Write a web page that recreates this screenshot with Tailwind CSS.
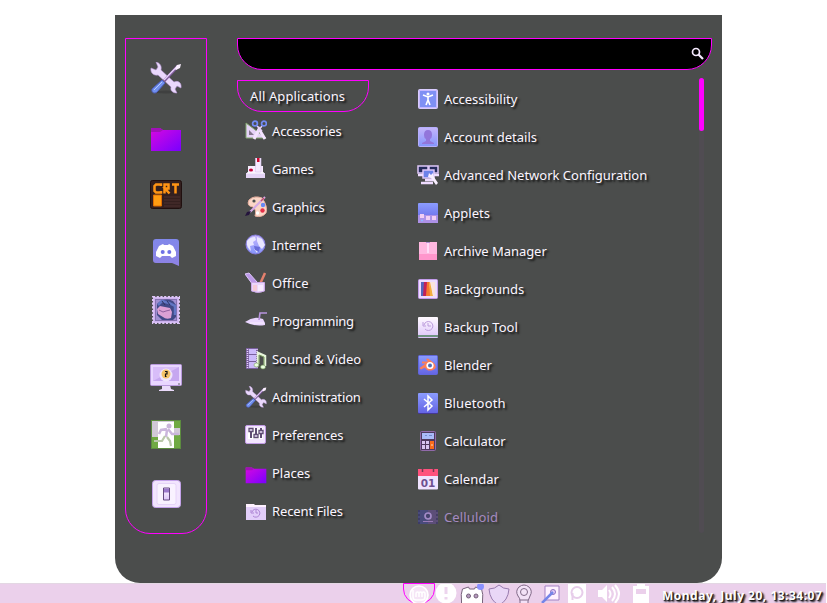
<!DOCTYPE html>
<html lang="en">
<head>
<meta charset="utf-8">
<title>Application menu</title>
<script src="https://cdn.jsdelivr.net/npm/@tailwindcss/browser@4"></script>
</head>
<body class="bg-white w-[827px] h-[603px] overflow-hidden font-['Noto_Sans',sans-serif] text-[13px] text-[#fbf5ff]">
<svg class="absolute w-0 h-0" aria-hidden="true">
  <defs>
    <linearGradient id="folder" x1="0" y1="0" x2="1" y2="1"><stop offset="0" stop-color="#d808e0"/><stop offset="1" stop-color="#7800ff"/></linearGradient>
    <linearGradient id="lilac" x1="0" y1="0" x2="0" y2="1"><stop offset="0" stop-color="#fffaff"/><stop offset="1" stop-color="#dcc4fa"/></linearGradient>
    <linearGradient id="blue" x1="0" y1="0" x2="0" y2="1"><stop offset="0" stop-color="#8b9cff"/><stop offset="1" stop-color="#6464e4"/></linearGradient>
    <linearGradient id="violet" x1="0" y1="0" x2="0" y2="1"><stop offset="0" stop-color="#8188ea"/><stop offset="1" stop-color="#8e82e4"/></linearGradient>
    <linearGradient id="pale" x1="0" y1="0" x2="0" y2="1"><stop offset="0" stop-color="#c5b5fb"/><stop offset="1" stop-color="#8495fc"/></linearGradient>
    <symbol id="tools" viewBox="0 0 32 32">
      <ellipse cx="16" cy="30" rx="13" ry="1.500" fill="#333" opacity=".5"/>
      <path d="M6 0l2 5-2 3-5-2c-1 5 3 8 7 7l13 12c-1 4 2 6 6 6l-2-4 2-3 4 2c1-5-3-8-7-6L11 8C12 4 10 1 6 0z" fill="#ead8fc" stroke="#b596d4" stroke-width=".6"/>
      <path d="M28 4L14 19" stroke="#7e5a9a" stroke-width="3"/><path d="M27.500 4L14 18" stroke="#e6d0fa" stroke-width="1.500"/>
      <path d="M31 2l-1 4-4 2-1-1 2-4z" fill="#fbf0ff"/>
      <path d="M12 18l3 3-8 9c-2 2-6 1-5-3z" fill="#7090ee" stroke="#4d5dbd"/><path d="M12 20l-8 8" stroke="#b4c8ff"/>
    </symbol>
    <symbol id="dir" viewBox="0 0 32 32"><path d="M1 5h9l3 2h18v21H1z" fill="url(#folder)"/><path d="M1 5h9l3 2-3 2H1z" fill="#a010b8"/></symbol>
  </defs>
</svg>
<div class="flex flex-col h-[603px]">
  <main class="mt-[15px] ml-[115px] w-[607px] h-[568px] shrink-0 bg-[#4b4d4c] rounded-b-[25px] flex items-start pt-[23px] pl-[10px]">
    <nav class="w-[82px] h-[496px] border border-[#f0f] rounded-b-[25px] flex flex-col items-center pt-[23px]">
      <svg class="size-8" viewBox="0 0 32 32"><use href="#tools"/></svg>
      <svg class="size-8 mt-[29px]" viewBox="0 0 32 32"><use href="#dir"/></svg>
      <svg class="size-8 mt-6" viewBox="0 0 32 32"><rect x=".5" y="1.500" width="31" height="28" rx="2" fill="#34201f" stroke="#20100f"/><path d="M14 18h16M14 21h16M14 24h16M14 27h16" stroke="#4c3030"/><g fill="none" stroke="#ff9414" stroke-width="2.500"><path d="M11 7V5.500H6L4.500 7v5L6 13.500h5V12M14.500 14.500V5.500h4v4h-3.500l4.500 5M22 5.500h7M25.500 5v9.500"/></g><path d="M3.500 16h8v11h-8z" fill="#ff9c12" stroke="#e06d00"/></svg>
      <svg class="size-8 mt-[25px]" viewBox="0 0 32 32"><path d="M6 3h20q3 0 3 3v24l-7-3H6q-3 0-3-3V6q0-3 3-3z" fill="url(#violet)"/><path d="M9 10l4-2 1 1h4l1-1 4 2 3 6v4l-4 2-2-2h-8l-2 2-4-2v-4z" fill="#fff"/><circle cx="12.700" cy="16" r="2" fill="#6f72e6"/><circle cx="19.300" cy="16" r="2" fill="#6f72e6"/></svg>
      <svg class="size-8 mt-[26px]" viewBox="0 0 32 32"><rect x="3" y="3" width="26" height="26" fill="#cdb2ef" stroke="#dcc4f6" stroke-width="2" stroke-dasharray="2.200 1.500"/><rect x="5.500" y="5.500" width="21" height="21" fill="#a08fd2" stroke="#8672b0"/><path d="M7 10q7-7 16-3l3 4v12l-3 3H12l-5-5z" fill="#414987"/><path d="M8 11l4-4 7 2 6 3v9" stroke="#6176c4" stroke-width="2.500" fill="none"/><path d="M12 7l3 4M17 7l3 4" stroke="#2e3361"/><path d="M7 15l3-3 10 2 2 4-1 6q-5 2-8-1l-5-3z" fill="#dba0d4"/><path d="M9 16l4 2 3-1 4-1" stroke="#7d4f92" stroke-width=".8" fill="none"/></svg>
      <svg class="size-8 mt-9" viewBox="0 0 32 32"><path d="M12 23h8l1 4 3 1v1H9v-1l3-1z" fill="#eadafa"/><rect x=".5" y="2.500" width="31" height="21" rx="1" fill="#e9d6ff" stroke="#b899dc"/><path d="M3 5h26v14H3z" fill="#c6a7f0"/><path d="M3 5h26L3 19z" fill="#d8bdf9"/><circle cx="16" cy="13" r="6.500" fill="#efe5fa"/><circle cx="16" cy="12" r="4.500" fill="#f5c468"/><path d="M15 9.500h2v2.500h-1.500v2.500h1" stroke="#111" stroke-width="1.200" fill="none"/><path d="M28 22h2" stroke="#666"/></svg>
      <svg class="size-8 mt-[25px]" viewBox="0 0 32 32"><rect x="1.500" y="1.500" width="29" height="28" fill="#d1c9d7" stroke="#5c8b3f"/><path d="M2 18h6v11H2zM24 16h6v13h-6zM24 2h6v7h-6z" fill="#70aa43"/><path d="M8 3h16v26H8z" fill="#fff"/><path d="M17 10l-6 1-2 4M18 10l4 5h7M17 11l-1 7" stroke="#cbb6dc" stroke-width="2.500" fill="none"/><path d="M17 18l3 4 1 5M15 17l-3 5H4" stroke="#bac8aa" stroke-width="2.200" fill="none"/><circle cx="19" cy="7" r="2.500" fill="#c9b4da"/></svg>
      <svg class="size-8 mt-[27px]" viewBox="0 0 32 32"><rect x="2.500" y="2.500" width="28" height="27" rx="3" fill="#f2e5fe" stroke="#c4a2ea"/><rect x="7" y="5.500" width="19" height="21" rx="2" fill="#f9f2ff" stroke="#e6d4f8"/><path d="M13.500 10h6v12h-6z" fill="url(#lilac)" stroke="#654a81"/><path d="M14 10.500h5v4h-5z" fill="#9c78cc"/></svg>
    </nav>
    <div class="ml-[30px] w-[475px] flex flex-col">
      <div class="h-8 bg-black border border-[#f0f] rounded-b-[25px] flex justify-end items-center pr-[6px]">
        <svg class="size-[14px]" viewBox="0 0 14 14" fill="none" stroke="#f6eaff"><circle cx="5" cy="5" r="3.500" stroke-width="1.700"/><path d="M7.500 7.500L12 12" stroke-width="2.200"/></svg>
      </div>
      <div class="flex">
        <ul class="w-[132px] pt-[10px] whitespace-nowrap [text-shadow:2px_2px_2px_#111] [&_span]:pt-[2px]">
          <li class="h-8 border border-[#f0f] rounded-b-[25px] pl-3 flex items-center"><span class="tracking-[0.13px]">All Applications</span></li>
          <li class="h-[38px] pl-2 flex items-center gap-[5px]"><svg class="size-[22px]" viewBox="0 0 22 22"><path d="M1 3v15h20z" fill="#e5d2f8" stroke="#83aa6f"/><path d="M4 10v5h5z" fill="#85768f"/><g fill="none"><path d="M9 19l5-10 6 10" stroke="#f3e2ff" stroke-width="3"/><path d="M12 6l5 5M17 6l-4 5" stroke="#e7d1fa" stroke-width="1.500"/><circle cx="10" cy="3.500" r="2.400" stroke="#738bf5" stroke-width="1.700"/><circle cx="19" cy="3.500" r="2.400" stroke="#738bf5" stroke-width="1.700"/></g></svg><span class="tracking-[-0.1px]">Accessories</span></li>
          <li class="h-[38px] pl-2 flex items-center gap-[5px]"><svg class="size-[22px]" viewBox="0 0 22 22"><path d="M3 8h15v6l2 2v4H1v-4l2-2z" fill="#f8edff"/><path d="M1 15h19v5H1z" fill="#e4d4f6"/><path d="M2 15h17" stroke="#fff"/><path d="M10.500 0h5.500v14h-5.500z" fill="#f6e9ff" stroke="#d9c3ef" stroke-width=".6"/><path d="M12 0h2.500v4H12z" fill="#d00830"/><ellipse cx="6" cy="12" rx="2" ry="1.500" fill="#c70038"/><path d="M2 6q3-1 4 2" stroke="#555" fill="none"/></svg><span class="tracking-[-0.2px]">Games</span></li>
          <li class="h-[38px] pl-2 flex items-center gap-[5px]"><svg class="size-[22px]" viewBox="0 0 22 22"><path d="M4 4q5-5 13-2 6 8 4 15-4 5-11 3 2-6-2-9-7-1-4-7z" fill="#fbd6c7" stroke="#e7af9e"/><circle cx="9" cy="5" r="1.600" fill="#4b5050"/><circle cx="18" cy="9" r="2.200" fill="#6689f6"/><circle cx="17.500" cy="14.500" r="2.200" fill="#e52f48"/><circle cx="12.500" cy="17" r="1.700" fill="#fff"/><path d="M20 1L5 16" stroke="#d4aae6" stroke-width="2"/><path d="M19 2l-3 3" stroke="#c44e66" stroke-width="1.500"/><path d="M6 15l-2 4-4 1 2-4z" fill="#24143c"/></svg><span class="tracking-[-0.15px]">Graphics</span></li>
          <li class="h-[38px] pl-2 flex items-center gap-[5px]"><svg class="size-[22px]" viewBox="0 0 22 22"><circle cx="10.500" cy="10.500" r="9.500" fill="url(#pale)" stroke="#857bdb"/><path d="M2 7q3-4 8-4l1 3-3 2 1 3-4 1 1 5q-5-4-4-10zM12 3l5 2 3 6-3 4-3-3-2-5zM9 15l4 1-1 3z" fill="#e9e6ff"/><path d="M9 12l6 1-1 5-4-2z" fill="#686bd9"/></svg><span class="tracking-[-0.1px]">Internet</span></li>
          <li class="h-[38px] pl-2 flex items-center gap-[5px]"><svg class="size-[22px]" viewBox="0 0 22 22"><path d="M0 2l4-1 8 9-4 3z" fill="#bc99e8" stroke="#dec6fb"/><path d="M20 1l-5 11" stroke="#e3806d" stroke-width="2.500"/><path d="M6.500 10.500h13V19q-6 3-13 0z" fill="#ead5fc" stroke="#cba9e8"/><path d="M8 13h4v6H8z" fill="#f5c9d8"/><path d="M13 13h5v6h-5z" fill="#f7eaff"/></svg><span class="tracking-[0.1px]">Office</span></li>
          <li class="h-[38px] pl-2 flex items-center gap-[5px]"><svg class="size-[22px]" viewBox="0 0 22 22"><path d="M0 12q7-5 14-4l4 1 2 4v2q-10 2-20-3z" fill="#ead6ff"/><path d="M14 10l1-7h7" stroke="#b894dd" stroke-width="1.700" fill="none"/><path d="M5 13h14" stroke="#f8edff"/></svg><span class="tracking-[-0.3px]">Programming</span></li>
          <li class="h-[38px] pl-2 flex items-center gap-[5px]"><svg class="size-[22px]" viewBox="0 0 22 22"><path d="M1 0h12v21H1z" fill="#785f9b"/><path d="M2.500 1v20M12 1v20" stroke="#e6d1fb" stroke-dasharray="1 1" stroke-width="1.500"/><path d="M4 1h7v5H4zM4 7h7v6H4zM4 14h7v6H4z" fill="#cbb9fa"/><path d="M13 16V5l7 3v10" stroke="#e7f5db" stroke-width="2.500" fill="none"/><path d="M14 16V7l5 2v9" stroke="#799c5e" fill="none"/><ellipse cx="11.500" cy="17" rx="2.500" ry="2" fill="#eaffdf" stroke="#799c5e" stroke-width=".6"/><ellipse cx="18" cy="19" rx="2.500" ry="2" fill="#eaffdf" stroke="#799c5e" stroke-width=".6"/></svg><span class="tracking-[-0.05px]">Sound &amp; Video</span></li>
          <li class="h-[38px] pl-2 flex items-center gap-[5px]"><svg class="size-[22px]" viewBox="0 0 32 32"><use href="#tools"/></svg><span class="tracking-[-0.12px]">Administration</span></li>
          <li class="h-[38px] pl-2 flex items-center gap-[5px]"><svg class="size-[22px]" viewBox="0 0 22 22"><rect x=".5" y="1.500" width="20" height="18" rx="1.500" fill="#f3e6ff" stroke="#c19ae5"/><path d="M3 4h15v11H3z" fill="#fff"/><path d="M6 4v10M11 4v10M16 4v10" stroke="#5f4d73" stroke-width="2"/><path d="M4 4.500h4v3H4zM9 10.500h4v3H9zM14 6.500h4v3h-4z" fill="#eee0fc" stroke="#5f4d73" stroke-width="1.300"/></svg><span class="tracking-[-0.1px]">Preferences</span></li>
          <li class="h-[38px] pl-2 flex items-center gap-[5px]"><svg class="size-[22px] mt-1" viewBox="0 0 32 32"><use href="#dir"/></svg><span>Places</span></li>
          <li class="h-[38px] pl-2 flex items-center gap-[5px]"><svg class="size-[22px]" viewBox="0 0 22 22"><path d="M1 4h8l1 1h11v15H1z" fill="#fff1ff"/><path d="M1 7h20v13H1z" fill="#e2cef9"/><path d="M6 10v3h3M7 12a4 4 0 1 1 1 4M11 10v3h2" stroke="#ad84d4" fill="none"/></svg><span class="tracking-[-0.1px]">Recent Files</span></li>
        </ul>
        <ul class="ml-[49px] w-[276px] pt-[10px] whitespace-nowrap [text-shadow:2px_2px_2px_#111] [&_span]:pt-[2px]">
          <li class="h-[38px] flex items-center gap-[5px]"><svg class="size-[21px]" viewBox="0 0 21 21"><rect x=".5" y=".5" width="19" height="19" rx="1" fill="#c5b8ff" stroke="#d9ccff"/><path d="M2 2h16v16H2z" fill="#7f90f4"/><circle cx="10" cy="5" r="1.500" fill="#fff"/><path d="M5 6l5 2 5-2M10 8v4M8 16l2-5 2 5" stroke="#fff" stroke-width="1.600" fill="none"/></svg><span>Accessibility</span></li>
          <li class="h-[38px] flex items-center gap-[5px]"><svg class="size-[21px]" viewBox="0 0 21 21"><rect x=".5" y=".5" width="19" height="19" rx="1" fill="url(#pale)" stroke="#b5aefc"/><path d="M10 3q4 0 4 5 0 3-2 4v2l4 2v1H4v-1l4-2v-2Q6 11 6 8q0-5 4-5z" fill="#9276db"/></svg><span>Account details</span></li>
          <li class="h-[38px] flex items-center gap-[5px]"><svg class="size-[21px] overflow-visible" viewBox="0 0 21 21"><g fill="#252b5c" stroke="#ddc6f7" stroke-width="1.500"><path d="M0 1h10v7H0zM11 1h9v7h-9z"/><path d="M5 5h11v8H5z" fill="#6c82e8"/></g><path d="M0 10h5M16 10h5M7 15h8M3 18h12" stroke="#efdcff" stroke-width="2.500"/><path d="M11 8l2 2 2-2 1 4 4 6-2 2-5-7-3-1z" fill="#f8eeff"/></svg><span>Advanced Network Configuration</span></li>
          <li class="h-[38px] flex items-center gap-[5px]"><svg class="size-[21px]" viewBox="0 0 21 21"><rect width="20" height="20" rx="1" fill="url(#blue)"/><path d="M0 12h20v8H0z" fill="#ad91e7"/><path d="M2 11h4v4H2zM8 13h4v4H8zM14 13h4v4h-4z" fill="#f1cdf4"/><path d="M3 17.500h2" stroke="#90baff" stroke-width="1.500"/></svg><span>Applets</span></li>
          <li class="h-[38px] flex items-center gap-[5px]"><svg class="size-[21px]" viewBox="0 0 21 21"><path d="M1 1h18v18H1z" fill="#ffb8e0"/><path d="M1 13h18v6H1z" fill="#ff96cc"/><path d="M10 2v10" stroke="#ffe9ff" stroke-width="1.500"/><path d="M8 1.500h4" stroke="#b08fd0" stroke-width="1"/></svg><span class="tracking-[-0.05px]">Archive Manager</span></li>
          <li class="h-[38px] flex items-center gap-[5px]"><svg class="size-[21px]" viewBox="0 0 21 21"><rect x=".5" y=".5" width="19" height="19" rx="1" fill="#eddbff" stroke="#c39beb"/><path d="M3 3h3v14H3z" fill="#5465bc"/><path d="M6 3h3v14H5z" fill="#c32058"/><path d="M9 3h2l2 14H8z" fill="#f5792f"/><path d="M11 3h2l2 14h-3z" fill="#f4ae42"/><path d="M12 3h5v14h-2z" fill="#fbe3dd"/></svg><span>Backgrounds</span></li>
          <li class="h-[38px] flex items-center gap-[5px]"><svg class="size-[21px]" viewBox="0 0 21 21"><rect width="20" height="21" rx="1" fill="url(#lilac)"/><path d="M0 19h20" stroke="#327642" stroke-width="1.300"/><path d="M5 5v4h3M6 8a4.500 4.500 0 1 1 1 4M10 6v3h3" stroke="#bb9bdc" fill="none"/></svg><span>Backup Tool</span></li>
          <li class="h-[38px] flex items-center gap-[5px]"><svg class="size-[21px]" viewBox="0 0 21 21"><rect x=".5" y=".5" width="19" height="19" rx="1" fill="url(#blue)" stroke="#6067dc"/><path d="M1.500 13l6-4.500H4V6.500h6L8 4l2-.500 6 4.500q4 5-1 7-6 2-8-2.500L3 14.500z" fill="#ff7e55"/><circle cx="12" cy="10.500" r="3.600" fill="#fff"/><circle cx="12" cy="10.500" r="2" fill="#506eb9"/></svg><span>Blender</span></li>
          <li class="h-[38px] flex items-center gap-[5px]"><svg class="size-[21px]" viewBox="0 0 21 21"><rect y="1" width="20" height="20" rx="1" fill="#453893"/><rect width="20" height="20" rx="1" fill="url(#blue)"/><path d="M6 6l8 7-4 4V3l4 4-8 7" stroke="#fff" stroke-width="1.500" fill="none"/></svg><span class="tracking-[0.15px]">Bluetooth</span></li>
          <li class="h-[38px] flex items-center gap-[5px]"><svg class="size-[21px]" viewBox="0 0 21 21"><rect x="2.500" y=".5" width="15" height="19" rx="1" fill="#50395f" stroke="#906aa9"/><path d="M4 2h12v6H4z" fill="#aabaf9"/><path d="M7 4.500h2M11 4.500h3" stroke="#748acb"/><path d="M4 10h3v3H4zM8 10h3v3H8zM4 14h3v4H4zM8 14h3v4H8z" fill="#d9c4f0"/><path d="M12 10h4v8h-4z" fill="#fa6b1c"/><path d="M13 14h2" stroke="#ffe0b8"/></svg><span>Calculator</span></li>
          <li class="h-[38px] flex items-center gap-[5px]"><svg class="size-[21px]" viewBox="0 0 21 21"><rect width="20" height="20.500" rx="1" fill="#f0e3ff"/><path d="M0 0h20v7H0z" fill="#ff527d"/><path d="M4.500 0v3M15.500 0v3" stroke="#753852" stroke-width="1.500"/><text x="10" y="17.500" text-anchor="middle" font-family="DejaVu Sans" font-weight="bold" font-size="10.500" fill="#6e5090" class="[text-shadow:none]">01</text></svg><span>Calendar</span></li>
          <li class="h-[38px] flex items-center gap-[5px] text-[#a58ac0] [text-shadow:2px_2px_2px_#353535]"><svg class="size-[21px]" viewBox="0 0 21 21"><path d="M0 3h20v14H0z" fill="#494b7b"/><path d="M10 3h10v14H10z" fill="#5c4e78"/><path d="M1 3v14M19 3v14" stroke="#36345a" stroke-width="1.200" stroke-dasharray="2 2"/><circle cx="10" cy="9" r="3" stroke="#a58cc8" stroke-width="1.700" fill="#45436d"/><path d="M5 14.500h10" stroke="#997bb6"/></svg><span class="tracking-[0.15px]">Celluloid</span></li>
        </ul>
        <div class="ml-[5px] mt-2 w-[5px] h-[455px] rounded bg-[#504c52]"><div class="h-[53px] rounded-sm bg-[#f0f]"></div></div>
      </div>
    </div>
  </main>
  <footer class="h-5 w-[826px] bg-[#ebd0eb] border-t border-[#e3d7e3] flex pl-[403px] relative">
    <div class="w-8 h-[21px] -mt-px shrink-0 border border-[#f0f] rounded-b-[15px] flex justify-center"><svg class="w-6 h-6 shrink-0" viewBox="0 0 24 24" fill="none" stroke="#fff"><circle cx="12" cy="11" r="9" fill="#f5e5f6" stroke-width="1.700"/><path d="M6 6v7q0 3 3 3h6q3 0 3-3v-3q0-2-1.500-2T15 10v3M15 10q0-2-1.500-2T12 10v3M12 10q0-2-1.500-2T9 10v3" stroke-width="1.500"/></svg></div>
    <svg class="w-[392px] h-5 shrink-0 absolute left-[435px] top-0" viewBox="435 584 392 20">
      <circle cx="446" cy="593" r="10.500" fill="#fff"/><path d="M446 587v7M446 597v2.500" stroke="#edd5ee" stroke-width="3"/>
      <path d="M461.500 604v-3q-1-7 1-12l6-2 1 2h5l1-2 6 2q2 5 1 12v3z" fill="#fff" stroke="#78647c"/><circle cx="468.500" cy="596" r="2" fill="#b69abf" stroke="#75617a"/><circle cx="476" cy="596" r="2" fill="#b69abf" stroke="#75617a"/><circle cx="480.500" cy="586.500" r="3.500" fill="#8b91ff"/>
      <path d="M499 585q4 4 10 4-1 12-10 16-9-4-10-16 6 0 10-4z" fill="#e9d7f7" stroke="#987baf"/>
      <g fill="none" stroke="#806987"><path d="M520 601q0-3-2-5-3-5 1-9 5-4 10 0 4 4 1 9l-2 5v3h-8z" fill="#f3e1f7"/><circle cx="524" cy="592" r="3.500"/><path d="M520 600h8"/></g>
      <path d="M545 586h14v14h-14z" fill="#fff1ff" stroke="#a281c3"/><circle cx="553" cy="592" r="2.500" fill="#e3caf9" stroke="#8d70bf"/><path d="M542 603l11-11" stroke="#7585e8" stroke-width="2.500"/>
      <path d="M568 583h18v22h-18z" fill="#fff"/><circle cx="577" cy="592.500" r="5.500" stroke="#e7cdea" stroke-width="2" fill="#fff"/><path d="M572.500 593v7" stroke="#e7cdea" stroke-width="2"/>
      <path d="M598 590h4l5-5v17l-5-5h-4z" fill="#fff"/><path d="M609 590q3 4 0 8M612 587q6 7 0 14M615 585q8 9 0 18" stroke="#fff" stroke-width="2" fill="none"/>
      <path d="M637 583h8v3h4v19h-16v-19h4z" fill="#fff"/><path d="M636 589h10v5h-10z" fill="#ebd0eb"/>
    </svg>
    <time class="absolute left-[662px] top-[2px] leading-5 text-[12px] tracking-[0.5px] font-bold text-white whitespace-nowrap [text-shadow:2px_2px_2px_#111,1px_1px_1px_#111]">Monday, July 20, 13:34:07</time>
  </footer>
</div>
</body>
</html>
